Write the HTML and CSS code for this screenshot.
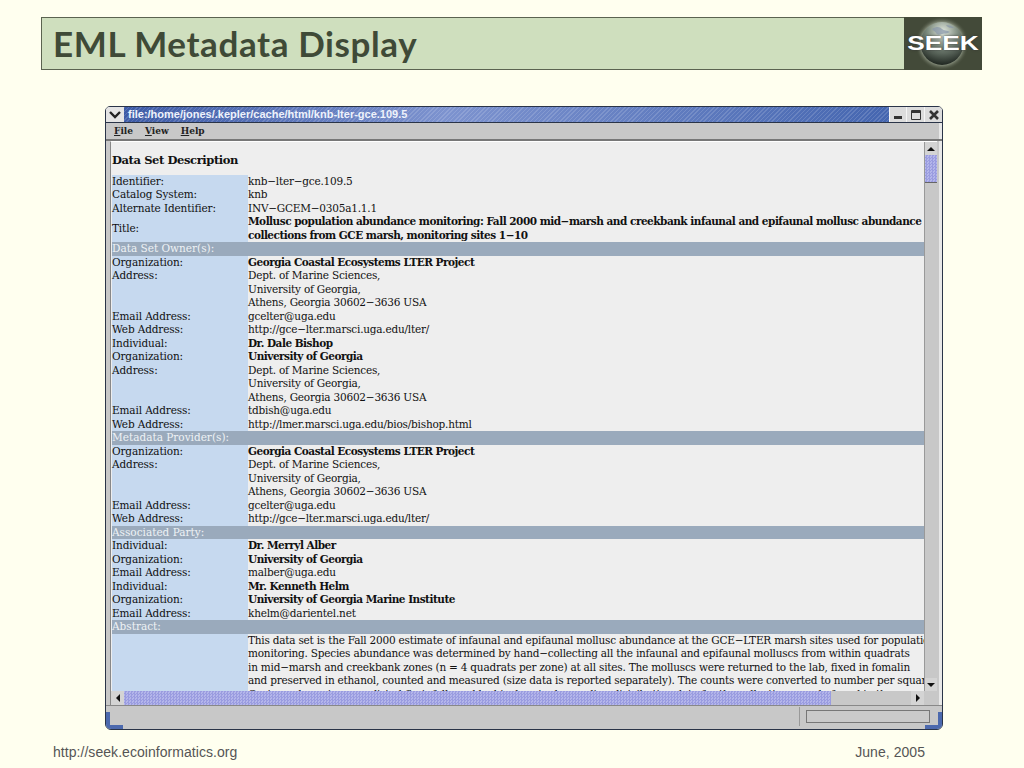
FILE: index.html
```html
<!DOCTYPE html>
<html lang="en">
<head>
<meta charset="utf-8">
<title>EML Metadata Display</title>
<link rel="stylesheet" href="styles.css">
</head>
<body>
<div class="slide">
  <header class="banner">
    <h1 class="banner-title">EML Metadata Display</h1>
    <div class="logo">
      <svg class="logo-globe" width="78" height="53" viewBox="0 0 78 53">
        <defs>
          <radialGradient id="halo" cx="50%" cy="50%" r="50%">
            <stop offset="0" stop-color="#e8efe2"/>
            <stop offset=".72" stop-color="#b9c2ae"/>
            <stop offset="1" stop-color="#434a39" stop-opacity="0"/>
          </radialGradient>
          <radialGradient id="globe" cx="52%" cy="22%" r="78%">
            <stop offset="0" stop-color="#dfe6dc"/>
            <stop offset=".45" stop-color="#7f8d80"/>
            <stop offset="1" stop-color="#1f2620"/>
          </radialGradient>
        </defs>
        <circle cx="38" cy="26.500" r="27" fill="url(#halo)"/>
        <circle cx="38" cy="26.500" r="21.500" fill="url(#globe)"/>
        <path d="M28 12c5-3 8-2 10 0s5 1 8 3c-3 2-5 1-8 2s-5 1-6-1-3-2-4-4zM42 8c3 0 6 1 8 3-3 0-6 0-8-3z" fill="#8796a8" opacity=".7"/>
      </svg>
      <span class="logo-text">SEEK</span>
    </div>
  </header>

  <main class="window">
    <div class="titlebar">
      <div class="wm-menu">
        <svg width="12" height="8" viewBox="0 0 12 8"><path d="M1 1l5 5 5-5" fill="none" stroke="#222" stroke-width="2.400"/></svg>
      </div>
      <div class="wm-title"><span>file:/home/jones/.kepler/cache/html/knb-lter-gce.109.5</span></div>
      <div class="wm-btn"><svg width="10" height="10" viewBox="0 0 10 10"><rect x="1" y="6" width="8" height="3" fill="#333"/></svg></div>
      <div class="wm-btn"><svg width="10" height="10" viewBox="0 0 10 10"><path d="M.5.5h9v9h-9z" fill="none" stroke="#333"/><rect x="1" y="1" width="8" height="2" fill="#333"/></svg></div>
      <div class="wm-btn"><svg width="10" height="10" viewBox="0 0 10 10"><path d="M1 1l8 8M9 1L1 9" stroke="#333" stroke-width="2.600"/></svg></div>
    </div>
    <nav class="menubar">
      <span class="menu"><u>F</u>ile</span>
      <span class="menu"><u>V</u>iew</span>
      <span class="menu"><u>H</u>elp</span>
    </nav>
    <div class="pane">
      <div class="viewport">
        <div class="doc">
          <h2 class="doc-title">Data Set Description</h2>
          <div class="row"><div class="k">Identifier:</div><div class="v">knb−lter−gce.109.5</div></div>
          <div class="row"><div class="k">Catalog System:</div><div class="v">knb</div></div>
          <div class="row"><div class="k">Alternate Identifier:</div><div class="v">INV−GCEM−0305a1.1.1</div></div>
          <div class="row mid"><div class="k">Title:</div><div class="v b">Mollusc population abundance monitoring: Fall 2000 mid−marsh and creekbank infaunal and epifaunal mollusc abundance<br>collections from GCE marsh, monitoring sites 1−10</div></div>
          <div class="sec">Data Set Owner(s):</div>
          <div class="row"><div class="k">Organization:</div><div class="v b">Georgia Coastal Ecosystems LTER Project</div></div>
          <div class="row"><div class="k">Address:</div><div class="v">Dept. of Marine Sciences,<br>University of Georgia,<br>Athens, Georgia 30602−3636 USA</div></div>
          <div class="row"><div class="k">Email Address:</div><div class="v">gcelter@uga.edu</div></div>
          <div class="row"><div class="k">Web Address:</div><div class="v">http://gce−lter.marsci.uga.edu/lter/</div></div>
          <div class="row"><div class="k">Individual:</div><div class="v b">Dr. Dale Bishop</div></div>
          <div class="row"><div class="k">Organization:</div><div class="v b">University of Georgia</div></div>
          <div class="row"><div class="k">Address:</div><div class="v">Dept. of Marine Sciences,<br>University of Georgia,<br>Athens, Georgia 30602−3636 USA</div></div>
          <div class="row"><div class="k">Email Address:</div><div class="v">tdbish@uga.edu</div></div>
          <div class="row"><div class="k">Web Address:</div><div class="v">http://lmer.marsci.uga.edu/bios/bishop.html</div></div>
          <div class="sec">Metadata Provider(s):</div>
          <div class="row"><div class="k">Organization:</div><div class="v b">Georgia Coastal Ecosystems LTER Project</div></div>
          <div class="row"><div class="k">Address:</div><div class="v">Dept. of Marine Sciences,<br>University of Georgia,<br>Athens, Georgia 30602−3636 USA</div></div>
          <div class="row"><div class="k">Email Address:</div><div class="v">gcelter@uga.edu</div></div>
          <div class="row"><div class="k">Web Address:</div><div class="v">http://gce−lter.marsci.uga.edu/lter/</div></div>
          <div class="sec">Associated Party:</div>
          <div class="row"><div class="k">Individual:</div><div class="v b">Dr. Merryl Alber</div></div>
          <div class="row"><div class="k">Organization:</div><div class="v b">University of Georgia</div></div>
          <div class="row"><div class="k">Email Address:</div><div class="v">malber@uga.edu</div></div>
          <div class="row"><div class="k">Individual:</div><div class="v b">Mr. Kenneth Helm</div></div>
          <div class="row"><div class="k">Organization:</div><div class="v b">University of Georgia Marine Institute</div></div>
          <div class="row"><div class="k">Email Address:</div><div class="v">khelm@darientel.net</div></div>
          <div class="sec">Abstract:</div>
          <div class="row"><div class="k"></div><div class="v">This data set is the Fall 2000 estimate of infaunal and epifaunal mollusc abundance at the GCE−LTER marsh sites used for population<br>monitoring. Species abundance was determined by hand−collecting all the infaunal and epifaunal molluscs from within quadrats<br>in mid−marsh and creekbank zones (n = 4 quadrats per zone) at all sites. The molluscs were returned to the lab, fixed in fomalin<br>and preserved in ethanol, counted and measured (size data is reported separately). The counts were converted to number per square<br>Gastropod species were listed first, followed by bivalves in descending distribution data for the collection sample found in the</div></div>
        </div>
      </div>
      <div class="vscroll">
        <div class="arrow-btn"><svg width="8" height="6" viewBox="0 0 8 6"><path d="M4 1l4 4H0z" fill="#111"/></svg></div>
        <div class="v-thumb"></div>
        <div class="v-track"></div>
        <div class="arrow-btn"><svg width="8" height="6" viewBox="0 0 8 6"><path d="M0 1h8L4 5z" fill="#111"/></svg></div>
      </div>
      <div class="hscroll">
        <div class="arrow-btn h"><svg width="6" height="8" viewBox="0 0 6 8"><path d="M5 0v8L1 4z" fill="#111"/></svg></div>
        <div class="h-thumb"></div>
        <div class="h-track"></div>
        <div class="arrow-btn h"><svg width="6" height="8" viewBox="0 0 6 8"><path d="M1 0v8l4-4z" fill="#111"/></svg></div>
      </div>
      <div class="corner"></div>
    </div>
    <div class="statusbar">
      <div class="status-msg"></div>
      <div class="status-progress"></div>
    </div>
    <i class="grip grip-l"></i>
    <i class="grip grip-r"></i>
  </main>

  <footer class="foot">
    <span>http://seek.ecoinformatics.org</span>
    <span>June, 2005</span>
  </footer>
</div>
</body>
</html>
```
FILE: styles.css
```css
* { box-sizing: border-box; }
html, body { margin: 0; padding: 0; background: #ffffef; }
.slide { width: 1024px; height: 768px; overflow: hidden; display: flex; flex-direction: column; padding-top: 17px; }

.banner { margin: 0 42px 0 41px; height: 53px; display: flex; background: #cfdfbe; border: 1px solid #5b6350; border-right: 0; }
.banner-title { flex: 1; margin: 0; padding-left: 11px; font: 700 35px/51px "Lato", "Liberation Sans", sans-serif; letter-spacing: .6px; color: #3f4a37; }
.logo { position: relative; width: 78px; margin: -1px 0; background: #434a39; overflow: hidden; }
.logo-globe { display: block; }
.logo-text { position: absolute; left: 2px; right: 2px; top: 15px; text-align: center; font: 700 21px/22px "Liberation Sans", sans-serif; color: #fff; transform: scaleX(1.25); text-shadow: 0 0 2px #333; }

.window { position: relative; width: 838px; height: 624px; margin: 36px 0 0 105px; border: 1px solid #2a3448; border-radius: 5px 5px 6px 6px; background: #c8c8c8; box-shadow: inset -3px 0 0 #e8e8e8; display: flex; flex-direction: column; overflow: hidden; }
.titlebar { height: 16px; display: flex; flex: none; background: #d8d8d8; border-bottom: 1px solid #2a3448; }
.wm-menu { width: 18px; display: flex; align-items: center; justify-content: center; background: #e4e4e4; }
.wm-title { flex: 1; padding-left: 4px; font: 700 11px/15px "Liberation Sans", sans-serif; color: #eef2fb; overflow: hidden; white-space: nowrap;
  background: repeating-linear-gradient(135deg, rgba(255,255,255,.14) 0 1px, transparent 1px 3px), linear-gradient(90deg, #3c5aa6, #7d93cf 42%, #4566b0); }
.wm-btn { width: 18px; display: flex; align-items: center; justify-content: center; background: #dcdcdc; border-left: 1px solid #f4f4f4; }
.wm-btn:nth-child(3) { width: 17px; }

.menubar { height: 18px; flex: none; display: flex; gap: 12px; padding-left: 8px; font: 700 9px/16px "DejaVu Serif", serif; color: #222; border-bottom: 2px solid #777; }

.pane { flex: 1; min-height: 0; margin: 0 5px 0 4px; display: grid; grid-template-columns: 1fr 13px; grid-template-rows: 1fr 14px; background: #eee; border-left: 1px solid #888; border-top: 1px solid #fff; }
.viewport { overflow: hidden; background: #eee; }
.doc { width: 1000px; padding: 8px 0 0 1px; font: 10.500px/13.500px "DejaVu Serif", "Liberation Serif", serif; letter-spacing: -.13px; color: #111; }
.doc-title { margin: 0; height: 24.500px; font: 700 11.500px/20px "DejaVu Serif", "Liberation Serif", serif; letter-spacing: -.4px; color: #111; }
.row { display: grid; grid-template-columns: 136px 1fr; white-space: nowrap; }
.k { background: #c6d9ef; }
.v { letter-spacing: -.22px; }
.v.b { font-weight: 700; letter-spacing: -.5px; }
.mid .k { display: flex; align-items: center; }
.sec { height: 13.500px; background: #9aaabc; color: #eef2f5; letter-spacing: 0; }

.vscroll { display: flex; flex-direction: column; background: #c8c8c8; border-left: 1px solid #999; }
.arrow-btn { width: 100%; height: 13px; flex: none; display: flex; align-items: center; justify-content: center; background: #d4d4d4; }
.arrow-btn.h { width: 13px; height: 100%; }
.v-thumb { height: 28px; flex: none; background: repeating-conic-gradient(#9a9ce0 0 25%, #b4b6ea 0 50%) 0 0 / 3px 3px; border-bottom: 1px solid #666; }
.v-track { flex: 1; }
.hscroll { display: flex; background: #c8c8c8; }
.h-thumb { width: 707px; flex: none; background: repeating-conic-gradient(#9a9ce0 0 25%, #b4b6ea 0 50%) 0 0 / 3px 3px; }
.h-track { flex: 1; }
.corner { background: #c8c8c8; }

.statusbar { height: 24px; flex: none; display: flex; gap: 6px; padding: 1px 12px 3px 5px; background: #c8c8c8; border-top: 1px solid #888; }
.status-msg { flex: 1; border-right: 1px solid #999; }
.status-progress { width: 124px; margin: 3px 0 3px; border: 1px solid #777; background: #cacaca; }

.grip { position: absolute; bottom: 0; width: 17px; height: 17px; border-bottom: 4px solid #4c69ae; }
.grip-l { left: 0; border-left: 4px solid #4c69ae; }
.grip-r { right: 0; border-right: 4px solid #4c69ae; }

.foot { flex: 1; display: flex; justify-content: space-between; padding: 15px 99px 0 53px; font: 14px/15px "Liberation Sans", sans-serif; letter-spacing: .05px; color: #555; }
```
